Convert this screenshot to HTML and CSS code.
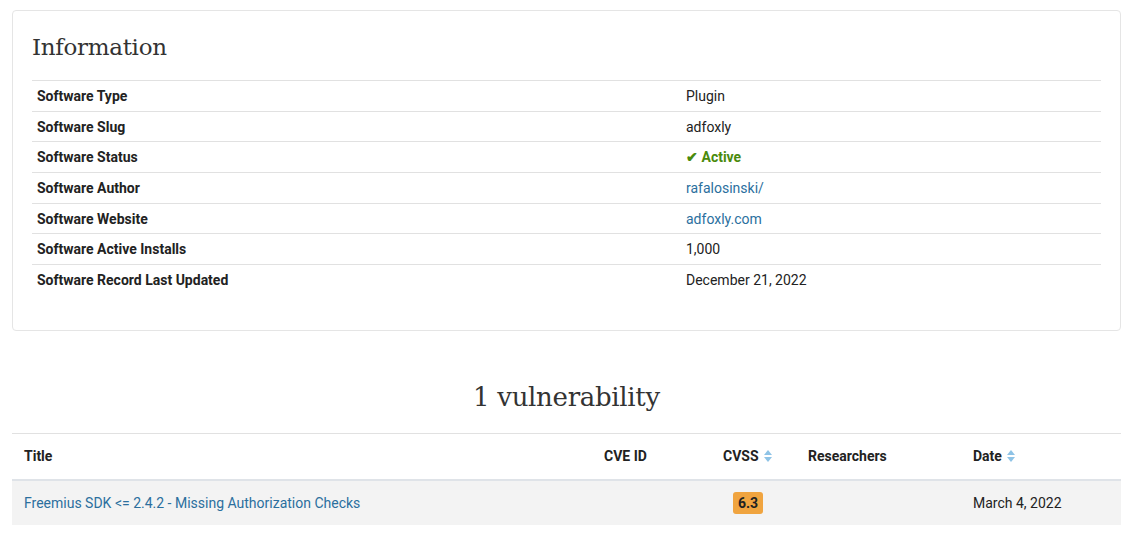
FILE: index.html
```html
<!DOCTYPE html>
<html>
<head>
<meta charset="utf-8">
<link rel="stylesheet" href="styles.css">
</head>
<body>
<div class="page">
  <section class="card">
    <h2 class="card-title">Information</h2>
    <table class="info">
      <tr><th>Software Type</th><td>Plugin</td></tr>
      <tr><th>Software Slug</th><td>adfoxly</td></tr>
      <tr><th>Software Status</th><td class="status">✔ Active</td></tr>
      <tr><th>Software Author</th><td><a href="#">rafalosinski/</a></td></tr>
      <tr><th>Software Website</th><td><a href="#">adfoxly.com</a></td></tr>
      <tr><th>Software Active Installs</th><td>1,000</td></tr>
      <tr><th>Software Record Last Updated</th><td>December 21, 2022</td></tr>
    </table>
  </section>

  <h2 class="section-title">1 vulnerability</h2>
  <table class="vulns">
    <thead>
      <tr>
        <th class="c-title">Title</th>
        <th class="c-cve">CVE ID</th>
        <th class="c-cvss">CVSS <span class="sort"><svg width="8" height="12" viewBox="0 0 8 12"><path d="M4 0 L8 5 H0 Z" fill="#8ec3e6"/><path d="M4 12 L8 7 H0 Z" fill="#8ec3e6"/></svg></span></th>
        <th class="c-res">Researchers</th>
        <th class="c-date">Date <span class="sort"><svg width="8" height="12" viewBox="0 0 8 12"><path d="M4 0 L8 5 H0 Z" fill="#8ec3e6"/><path d="M4 12 L8 7 H0 Z" fill="#8ec3e6"/></svg></span></th>
      </tr>
    </thead>
    <tbody>
      <tr>
        <td><a href="#">Freemius SDK &lt;= 2.4.2 - Missing Authorization Checks</a></td>
        <td></td>
        <td><span class="badge">6.3</span></td>
        <td></td>
        <td>March 4, 2022</td>
      </tr>
    </tbody>
  </table>
</div>
</body>
</html>
```

FILE: styles.css
```css
html, body {
  margin: 0;
  padding: 0;
  background: #fff;
}
body {
  font-family: Roboto, "Liberation Sans", Arial, sans-serif;
  font-size: 14px;
  color: #222;
}
.page {
  padding: 10px 10px 0 12px;
}
.card {
  border: 1px solid #e5e5e5;
  border-radius: 4px;
  padding: 19px 19px 35px 19px;
  width: 1069px;
}
.card-title {
  font-family: "DejaVu Serif", "Liberation Serif", serif;
  font-weight: normal;
  font-size: 23px;
  color: #333;
  margin: 2px 0 18px 0;
  line-height: 30px;
  letter-spacing: -0.3px;
}
.info {
  width: 100%;
  border-collapse: collapse;
}
.info th, .info td {
  text-align: left;
  padding: 7px 5px 5px 5px;
  height: 17.67px;
  line-height: 17.67px;
  border-top: 1px solid #e1e1e1;
  vertical-align: middle;
}
.info th {
  font-weight: bold;
  width: 639px;
}
a {
  color: #2b6f9e;
  text-decoration: none;
}
.status {
  color: #4a8a0c;
  font-weight: bold;
}
.section-title {
  font-family: "DejaVu Serif", "Liberation Serif", serif;
  font-weight: normal;
  font-size: 26px;
  color: #333;
  text-align: center;
  margin: 48px 0 18px 0;
  line-height: 36px;
  letter-spacing: -0.3px;
}
.vulns {
  width: 1109px;
  border-collapse: collapse;
}
.vulns th {
  text-align: left;
  font-weight: bold;
  padding: 12px 12px;
  line-height: 20px;
  border-top: 1px solid #e1e1e1;
  border-bottom: 2px solid #dfe3e8;
}
.vulns td {
  background: #f3f3f3;
  padding: 11px 12px;
  line-height: 20px;
  height: 20px;
}
.c-title { width: 556px; }
.c-cve { width: 95px; }
.c-cvss { width: 61px; }
.c-res { width: 141px; }
.sort {
  display: inline-block;
  vertical-align: -1px;
  margin-left: 2px;
}
.badge {
  display: inline-block;
  background: #f0a43f;
  color: #222;
  font-weight: bold;
  border-radius: 3px;
  padding: 2px 5px;
  line-height: 18px;
  margin-left: 10px;
}
```
